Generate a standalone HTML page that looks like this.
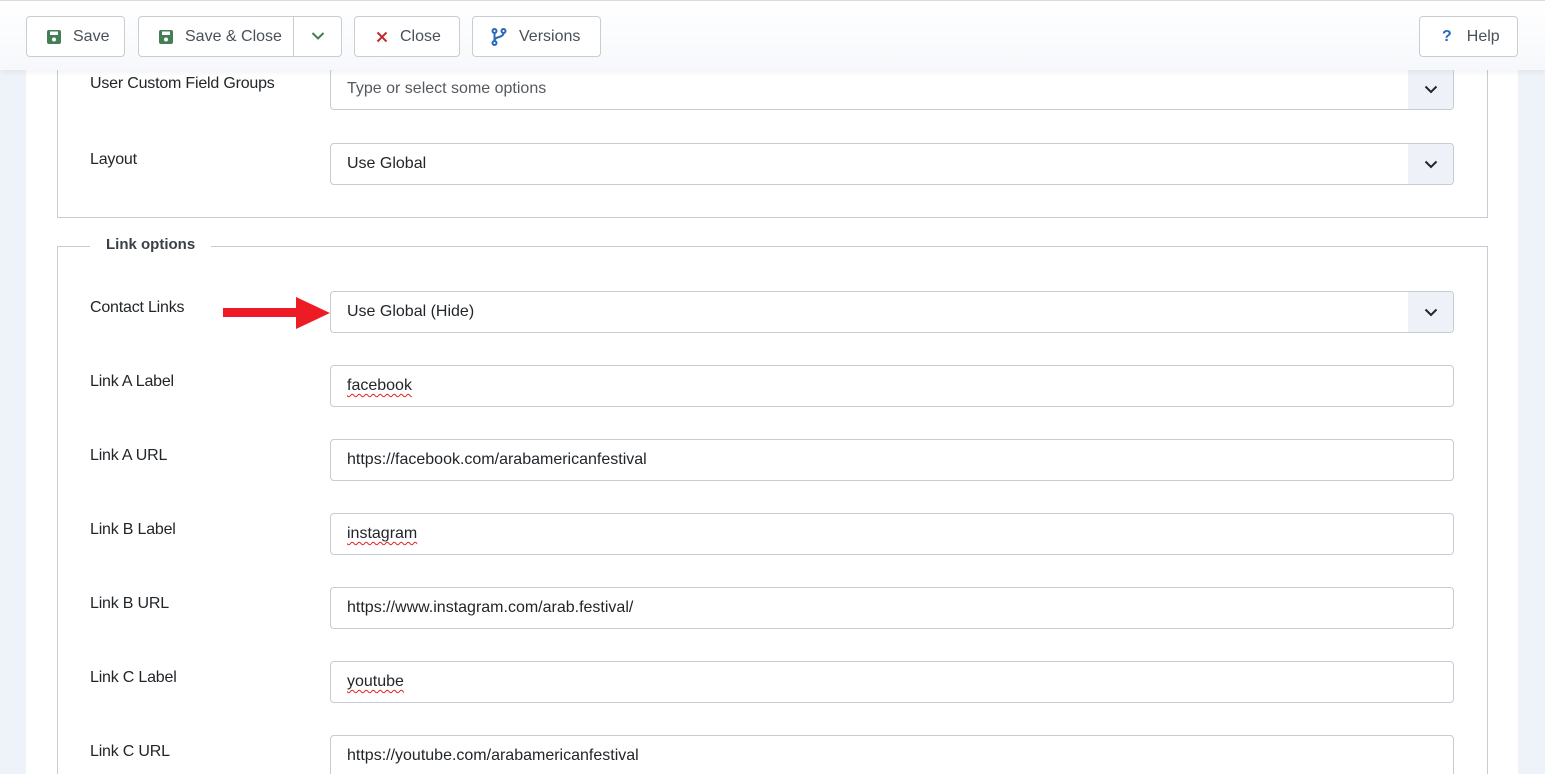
<!DOCTYPE html>
<html style="width:1545px;height:774px;overflow:hidden"><head><meta charset="utf-8"><style>
*{box-sizing:border-box;margin:0;padding:0}
body{width:1545px;height:774px;overflow:hidden;background:#eef2f9;font-family:"Liberation Sans",Arial,sans-serif;color:#22262a;position:relative}
.panel{position:absolute;left:26px;top:0;width:1492px;height:774px;background:#fff}
.tb{position:absolute;left:0;top:0;width:1545px;height:70px;background:linear-gradient(#fff,#f6f8fb);border-top:1px solid #d6dbe2;box-shadow:0 2px 6px rgba(0,0,0,.06);z-index:5}
.btn{position:absolute;top:15px;height:41px;border:1px solid #c8cdd4;border-radius:4px;background:#fff;font-size:16px;color:#495057;display:flex;align-items:center}
.btn svg{margin-right:12px}
.fs{position:absolute;border:1px solid #c5ccd6}
.legend{position:absolute;left:90px;top:236px;padding:0 16px;background:#fff;font-weight:bold;font-size:15px;color:#3a4047}
.lbl{position:absolute;left:90px;font-size:16px;color:#22262a;letter-spacing:-0.2px}
.in{position:absolute;left:330px;width:1124px;height:42px;border:1px solid #c5ccd6;border-radius:4px;background:#fff;font-size:16px;padding-left:16px;line-height:40px;color:#22262a}
.sel .arr{position:absolute;right:0;top:0;width:45px;height:40px;background:#eef2f8;border-radius:0 4px 4px 0;display:flex;align-items:center;justify-content:center}
.sp{text-decoration:underline wavy #e02020;text-decoration-thickness:1px;text-underline-offset:3px}
</style></head><body>
<div class="panel"></div>
<div class="tb">
<div class="btn" style="left:26px;width:99px;padding-left:20px"><svg width="14" height="14" viewBox="0 0 14 14"><rect x="0" y="0" width="14" height="14" rx="2" fill="#457d54"/><rect x="3" y="1.5" width="8" height="3.5" fill="#fff"/><circle cx="7" cy="9.5" r="2" fill="#fff"/></svg>Save</div>
<div class="btn" style="left:138px;width:204px;padding-left:20px"><svg width="14" height="14" viewBox="0 0 14 14"><rect x="0" y="0" width="14" height="14" rx="2" fill="#457d54"/><rect x="3" y="1.5" width="8" height="3.5" fill="#fff"/><circle cx="7" cy="9.5" r="2" fill="#fff"/></svg>Save &amp; Close<span style="position:absolute;left:154px;top:0;width:1px;height:39px;background:#c8cdd4"></span><svg style="position:absolute;left:172px;top:14px" width="14" height="10" viewBox="0 0 14 10"><path d="M1.5 2l5.5 5.5L12.5 2" stroke="#457d54" stroke-width="2" fill="none"/></svg></div>
<div class="btn" style="left:354px;width:106px;padding-left:21px"><svg width="12" height="12" viewBox="0 0 12 12"><path d="M1.5 1.5l9 9M10.5 1.5l-9 9" stroke="#c52827" stroke-width="2"/></svg>Close</div>
<div class="btn" style="left:472px;width:129px;padding-left:18px"><svg width="16" height="18" viewBox="0 0 16 18"><g stroke="#2a69b8" stroke-width="2" fill="none"><circle cx="3.5" cy="3" r="2"/><circle cx="12.5" cy="3" r="2"/><circle cx="3.5" cy="15" r="2"/><path d="M3.5 5v8M12.5 5c0 5-9 3-9 8"/></g></svg>Versions</div>
<div class="btn" style="left:1419px;width:99px;padding-left:22px"><span style="color:#2a69b8;font-weight:bold;margin-right:15px">?</span>Help</div>
</div>
<div class="fs" style="left:57px;top:-10px;width:1431px;height:228px"></div>
<div class="fs" style="left:57px;top:246px;width:1431px;height:540px"></div>
<div class="legend">Link options</div>

<div class="lbl" style="top:75px">User Custom Field Groups</div>
<div class="in sel" style="top:68px;color:#55595e">Type or select some options<div class="arr"><svg width="14" height="9" viewBox="0 0 14 9"><path d="M1.5 1.5l5.5 5.5 5.5-5.5" stroke="#22262a" stroke-width="2" fill="none"/></svg></div></div>
<div class="lbl" style="top:151px">Layout</div>
<div class="in sel" style="top:143px">Use Global<div class="arr"><svg width="14" height="9" viewBox="0 0 14 9"><path d="M1.5 1.5l5.5 5.5 5.5-5.5" stroke="#22262a" stroke-width="2" fill="none"/></svg></div></div>

<div class="lbl" style="top:299px">Contact Links</div>
<svg style="position:absolute;left:223px;top:297px" width="107" height="32" viewBox="0 0 107 32"><rect x="0" y="11" width="75" height="9" fill="#ed1c24"/><path d="M73 0L107 16 73 32z" fill="#ed1c24"/></svg>
<div class="in sel" style="top:291px">Use Global (Hide)<div class="arr"><svg width="14" height="9" viewBox="0 0 14 9"><path d="M1.5 1.5l5.5 5.5 5.5-5.5" stroke="#22262a" stroke-width="2" fill="none"/></svg></div></div>

<div class="lbl" style="top:373px">Link A Label</div>
<div class="in" style="top:365px"><span class="sp">facebook</span></div>
<div class="lbl" style="top:447px">Link A URL</div>
<div class="in" style="top:439px">https://facebook.com/arabamericanfestival</div>
<div class="lbl" style="top:521px">Link B Label</div>
<div class="in" style="top:513px"><span class="sp">instagram</span></div>
<div class="lbl" style="top:595px">Link B URL</div>
<div class="in" style="top:587px">https://www.instagram.com/arab.festival/</div>
<div class="lbl" style="top:669px">Link C Label</div>
<div class="in" style="top:661px"><span class="sp">youtube</span></div>
<div class="lbl" style="top:743px">Link C URL</div>
<div class="in" style="top:735px">https://youtube.com/arabamericanfestival</div>
</body></html>
